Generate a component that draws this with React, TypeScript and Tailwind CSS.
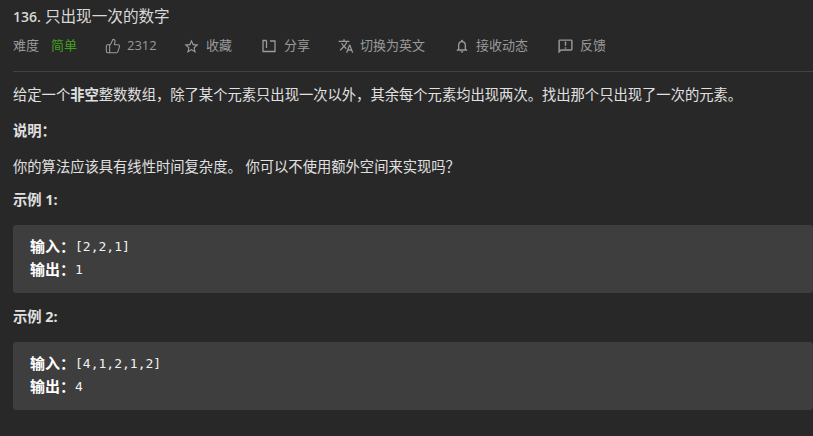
import { ThumbsUp } from 'lucide-react';
import { MdOutlineAnnouncement, MdOutlineNotifications, MdStarBorder, MdTranslate } from 'react-icons/md';

const font = "font-['Open_Sans','Noto_Sans_CJK_SC',sans-serif]";

const ShareIcon = () => (
    <svg width="14" height="14" viewBox="0 0 14 14" fill="none" stroke="currentColor" strokeWidth="1.3">
        <path d="M4.5 1.5H1v11h12V2H8M4.5 1.5V9" />
    </svg>
);

const actions = [
    { icon: <MdStarBorder size={17} className="-ml-[2px]" />, label: '收藏', gap: 'gap-[6px]', width: 'w-[77px]' },
    { icon: <ShareIcon />, label: '分享', gap: 'gap-[8px]', width: 'w-[76px]' },
    { icon: <MdTranslate size={16} />, label: '切换为英文', gap: 'gap-[6px]', width: 'w-[118px]' },
    { icon: <MdOutlineNotifications size={16} className="-ml-[2px]" />, label: '接收动态', gap: 'gap-[6px]', width: 'w-[102px]' },
    { icon: <MdOutlineAnnouncement size={17} className="-ml-px" />, label: '反馈', gap: 'gap-[6px]', width: 'w-[60px]' },
];

function Example({ input, output }: { input: string; output: string }) {
    return (
        <div className="bg-[#3e3e3e] rounded-[3px] h-[68px] pl-[17px] pt-[10px] text-[13px] text-[#f0f0f0]">
            <div className="flex items-center h-[23px]">
                <span className="font-bold text-white text-[15px]">输入：</span>
                <span className="font-['DejaVu_Sans_Mono',monospace]">{input}</span>
            </div>
            <div className="flex items-center h-[23px]">
                <span className="font-bold text-white text-[15px]">输出：</span>
                <span className="font-['DejaVu_Sans_Mono',monospace]">{output}</span>
            </div>
        </div>
    );
}

export default function App() {
    return (
        <div className={`${font} w-[813px] h-[436px] overflow-hidden bg-[#282828] pl-[13px] text-[14.3px] text-[#e0e0e0]`}>
            <h1 className="pt-[6px] h-[35px] text-[15.6px] leading-[20px] text-[#d8d8d8]">
                <span className="font-semibold text-[14px]">136.</span> 只出现一次的数字
            </h1>
            <div className="flex items-center h-[22px] text-[#9a9a9a] text-[13px]">
                <span className="w-[38px]">难度</span>
                <span className="w-[54px] text-[#43a01f]">简单</span>
                <div className="flex items-center gap-[6px] w-[80px]">
                    <ThumbsUp size={16} strokeWidth={1.6} />
                    <span>2312</span>
                </div>
                {actions.map((action) => (
                    <div key={action.label} className={`flex items-center ${action.gap} ${action.width}`}>
                        {action.icon}
                        <span>{action.label}</span>
                    </div>
                ))}
            </div>
            <div className="h-px bg-[#434343] mt-[14px]" />
            <p className="mt-[13px] leading-[20px]">给定一个<b>非空</b>整数数组，除了某个元素只出现一次以外，其余每个元素均出现两次。找出那个只出现了一次的元素。</p>
            <p className="mt-[16px] leading-[20px] font-bold">说明：</p>
            <p className="mt-[16px] leading-[20px]">你的算法应该具有线性时间复杂度。 你可以不使用额外空间来实现吗？</p>
            <p className="mt-[13px] leading-[20px] font-bold">示例 1:</p>
            <div className="mt-[15px]">
                <Example input="[2,2,1]" output="1" />
            </div>
            <p className="mt-[14px] leading-[20px] font-bold">示例 2:</p>
            <div className="mt-[15px]">
                <Example input="[4,1,2,1,2]" output="4" />
            </div>
        </div>
    );
}
